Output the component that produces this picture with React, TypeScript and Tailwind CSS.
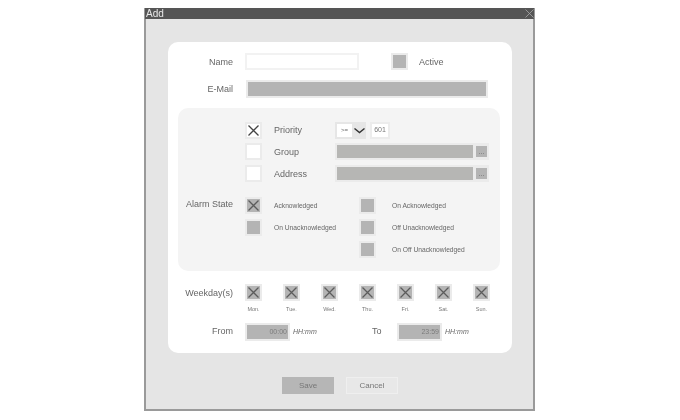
import React from 'react';

const font = '[font-family:"Liberation_Sans",Arial,sans-serif]';

const Cross = ({ dark }: { dark?: boolean }) => (
  <svg viewBox="0 0 11 11" className="w-[11px] h-[11px]" fill="none" stroke={dark ? '#5c5c5c' : '#444444'} strokeWidth="1.3">
    <path d="M0.5 0.5L10.5 10.5M10.5 0.5L0.5 10.5" />
  </svg>
);

// disabled = grey fill, otherwise white
const Check = ({ checked, disabled }: { checked?: boolean; disabled?: boolean }) => (
  <div className="w-[17px] h-[17px] shrink-0 bg-[#ebebeb] p-[2px]">
    <div className={`w-full h-full flex items-center justify-center ${disabled ? 'bg-[#b4b4b4]' : 'bg-white'}`}>
      {checked && <Cross dark={disabled} />}
    </div>
  </div>
);

const GreyField = ({ className, children }: { className: string; children?: React.ReactNode }) => (
  <div className={`bg-[#ebebeb] p-[2px] ${className}`}>
    <div className="w-full h-full bg-[#b4b4b4] flex items-center justify-end pr-[1px] text-[7px] text-[#7c7c7c]">{children}</div>
  </div>
);

const PickField = () => (
  <div className="w-[154px] h-[17px] bg-[#ebebeb] flex items-center px-[2px] gap-[3px]">
    <div className="w-[136px] h-[13px] bg-[#b6b6b4]" />
    <div className="w-[11px] h-[11px] bg-[#b4b4b4] flex items-center justify-center text-[7px] leading-none text-[#666] pb-[1px]">...</div>
  </div>
);

const StateRow = ({ label, checked, gap }: { label: string; checked?: boolean; gap: string }) => (
  <div className="flex items-center h-[17px]">
    <Check disabled checked={checked} />
    <span className={`${gap} pt-[2px] text-[6.7px] text-[#666666] whitespace-nowrap`}>{label}</span>
  </div>
);

const days = ['Mon.', 'Tue.', 'Wed.', 'Thu.', 'Fri.', 'Sat.', 'Sun.'];

export default function App() {
  return (
    <div className={`w-[680px] h-[420px] bg-white pt-[8px] pl-[144px] blur-[0.6px] ${font}`}>
      <div className="w-[391px] h-[403px] border-x-2 border-b-2 border-[#9a9a9a] bg-[#e5e5e5] flex flex-col">
        <div className="h-[11px] -mx-[1px] bg-[#555555] flex items-center justify-between pl-[1px] shrink-0">
          <span className="text-[10px] leading-none text-[#e8e8e8]">Add</span>
          <svg viewBox="0 0 9 9" className="w-[9px] h-[9px]" fill="none" stroke="#a8a8a8" strokeWidth="0.8">
            <path d="M0.5 0.5L8.5 8.5M8.5 0.5L0.5 8.5" />
          </svg>
        </div>

        <div className="mt-[23px] ml-[22px] w-[344px] h-[311px] bg-white rounded-[10px] pt-[11px] px-[10px] shrink-0">
          <div className="flex items-center h-[17px]">
            <span className="w-[55px] pt-[2px] text-right text-[9px] text-[#666666]">Name</span>
            <div className="ml-[12px] w-[114px] h-[17px] bg-white border-2 border-[#f2f2f2]" />
            <div className="ml-[32px]"><Check disabled /></div>
            <span className="ml-[11px] pt-[2px] text-[9px] text-[#666666]">Active</span>
          </div>
          <div className="flex items-center h-[18px] mt-[10px]">
            <span className="w-[55px] pt-[2px] text-right text-[9px] text-[#666666]">E-Mail</span>
            <GreyField className="ml-[13px] w-[242px] h-[18px]" />
          </div>

          <div className="mt-[10px] w-[322px] h-[163px] bg-[#f4f4f4] rounded-[10px] pt-[14px]">
            <div className="flex items-center h-[17px] pl-[67px]">
              <Check checked />
              <span className="ml-[12px] w-[61px] text-[9px] text-[#666666]">Priority</span>
              <div className="w-[31px] h-[17px] bg-[#e6e6e6] flex items-center pl-[2px]">
                <div className="w-[15px] h-[13px] bg-white flex items-center justify-center text-[6px] text-[#666]">&gt;=</div>
                <svg viewBox="0 0 11 6" className="ml-[2px] w-[11px] h-[6px]" fill="none" stroke="#333" strokeWidth="1.4">
                  <path d="M0.5 0.5L5.5 4.5L10.5 0.5" />
                </svg>
              </div>
              <div className="ml-[4px] w-[20px] h-[17px] bg-white border-2 border-[#ececec] flex items-center justify-center text-[7px] text-[#777]">601</div>
            </div>
            <div className="flex items-center h-[17px] mt-[4px] pl-[67px]">
              <Check />
              <span className="ml-[12px] w-[61px] pt-[2px] text-[9px] text-[#666666]">Group</span>
              <PickField />
            </div>
            <div className="flex items-center h-[17px] mt-[5px] pl-[67px]">
              <Check />
              <span className="ml-[12px] w-[61px] pt-[2px] text-[9px] text-[#666666]">Address</span>
              <PickField />
            </div>

            <div className="flex mt-[15px]">
              <span className="w-[67px] pl-[8px] text-[9px] leading-[14px] text-[#666666]">Alarm State</span>
              <div className="w-[114px] flex flex-col gap-[5px]">
                <StateRow label="Acknowledged" checked gap="ml-[12px]" />
                <StateRow label="On Unacknowledged" gap="ml-[12px]" />
              </div>
              <div className="flex flex-col gap-[5px]">
                <StateRow label="On Acknowledged" gap="ml-[16px]" />
                <StateRow label="Off Unacknowledged" gap="ml-[16px]" />
                <StateRow label="On Off Unacknowledged" gap="ml-[16px]" />
              </div>
            </div>
          </div>

          <div className="flex mt-[13px]">
            <span className="w-[67px] pt-[1px] pr-[12px] text-right text-[9px] leading-[17px] text-[#666666] whitespace-nowrap">Weekday(s)</span>
            <div className="flex gap-[21px]">
              {days.map(d => (
                <div key={d} className="w-[17px] flex flex-col items-center">
                  <Check disabled checked />
                  <span className="mt-[4px] text-[5.5px] leading-[8px] text-[#777777]">{d}</span>
                </div>
              ))}
            </div>
          </div>

          <div className="flex items-center h-[18px] mt-[10px]">
            <span className="w-[55px] text-right text-[9px] text-[#666666]">From</span>
            <GreyField className="ml-[12px] w-[45px] h-[18px]">00:00</GreyField>
            <span className="ml-[3px] w-[79px] text-[7px] italic text-[#666666]">HH:mm</span>
            <span className="w-[25px] text-[9px] text-[#666666]">To</span>
            <GreyField className="w-[45px] h-[18px]">23:59</GreyField>
            <span className="ml-[3px] text-[7px] italic text-[#666666]">HH:mm</span>
          </div>
        </div>

        <div className="mt-[24px] ml-[136px] flex gap-[12px]">
          <button className="w-[52px] h-[17px] bg-[#b6b6b6] text-[8px] text-[#777]">Save</button>
          <button className="w-[52px] h-[17px] bg-[#e8e8e8] border border-[#efefef] text-[8px] text-[#777]">Cancel</button>
        </div>
      </div>
    </div>
  );
}
